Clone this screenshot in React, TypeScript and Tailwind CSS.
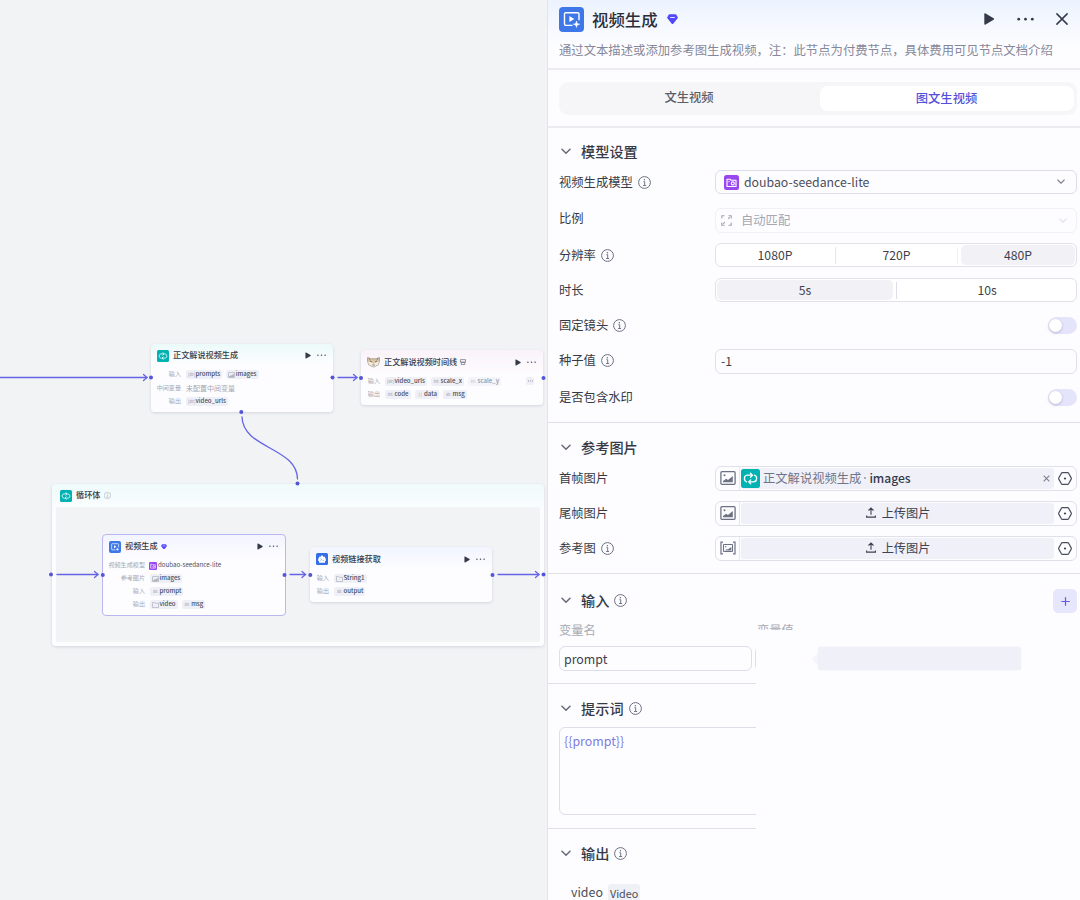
import type { ReactNode } from "react";

type TagItem = { icon: string; text: string; faded?: boolean };

const InfoIcon = ({ size = 13, className = "text-[#6b6f80]" }: { size?: number; className?: string }) => (
  <svg width={size} height={size} viewBox="0 0 13 13" fill="none" stroke="currentColor" className={`shrink-0 ${className}`}>
    <circle cx="6.5" cy="6.5" r="5.9" strokeWidth="1" />
    <path d="M5.4 5.7h1.3v3.7M5.1 9.5h3" strokeWidth="0.95" />
    <circle cx="6.4" cy="3.7" r="0.75" fill="currentColor" stroke="none" />
  </svg>
);

const PlayIcon = ({ w, h }: { w: number; h: number }) => (
  <svg width={w} height={h} viewBox="0 0 11 12" className="shrink-0 text-[#343a4a]">
    <path d="M0.8 1.2v9.6c0 .8.6 1.1 1.3.7l8-4.7c.6-.4.6-1.2 0-1.6l-8-4.7C1.4.1.8.4.8 1.2z" fill="currentColor" />
  </svg>
);

const DotsIcon = ({ w }: { w: number }) => (
  <svg width={w} height={w / 4} viewBox="0 0 16 4" fill="#343a4a" className="shrink-0">
    <circle cx="1.6" cy="2" r="1.3" />
    <circle cx="8" cy="2" r="1.3" />
    <circle cx="14.4" cy="2" r="1.3" />
  </svg>
);

const GemIcon = ({ w }: { w: number }) => (
  <svg width={w} height={w * 0.95} viewBox="0 0 12 11.4" className="shrink-0">
    <path d="M2.7.4h6.6c.4 0 .7.2.9.5l1.5 2.6c.2.4.2.8-.1 1.1L6.8 10.600c-.4.5-1.1.5-1.6 0L.4 4.6C.1 4.3.1 3.9.3 3.5L1.8.9c.2-.3.5-.5.9-.5z" fill="#5147ff" />
    <path d="M3.9 3.8h4.2" stroke="#e8e6ff" strokeWidth="1.1" strokeLinecap="round" />
  </svg>
);

const VideoIcon = ({ size }: { size: number }) => (
  <svg width={size} height={size} viewBox="0 0 25 25" fill="none" className="shrink-0">
    <rect width="25" height="25" rx="4" fill="#3e78e8" />
    <path d="M13.5 18.400H6.8a1.3 1.3 0 0 1-1.3-1.300V7a1.3 1.3 0 0 1 1.3-1.300h11.9A1.3 1.3 0 0 1 20 7v6.300" stroke="#fff" strokeWidth="1.4" />
    <path d="M10.400 9v6l4.900-3z" fill="#fff" />
    <path d="M17.500 14c.3 2.200 1 2.900 3.200 3.200-2.200.3-2.900 1-3.200 3.200-.3-2.200-1-2.900-3.200-3.200 2.200-.3 2.900-1 3.200-3.200z" fill="#fff" stroke="#fff" strokeWidth=".6" />
  </svg>
);

const LoopIcon = ({ size }: { size: number }) => (
  <svg width={size} height={size} viewBox="0 0 19 19" fill="none" className="shrink-0">
    <rect width="19" height="19" rx="2.5" fill="#00b2b2" />
    <g stroke="#fff" strokeWidth="1.3" strokeLinecap="round" strokeLinejoin="round">
      <path d="M5.600 12.900C2.500 11.900 2.500 6.200 6.600 6.200h4.800M9.500 4.200l2 2-2 2" />
      <path d="M13.400 6.200c3.100 1 3.100 6.700-1 6.700H7.800M9.700 10.900l-2 2 2 2" />
    </g>
  </svg>
);

const PluginIcon = ({ size }: { size: number }) => (
  <svg width={size} height={size} viewBox="0 0 12 12" className="shrink-0">
    <rect width="12" height="12" rx="1.5" fill="#346ee8" />
    <path d="M3 3.700h1.700a1.300 1.300 0 0 1 2.600 0H9v1.600h.8v2.600H9v1.800H3V7.900h-.8V5.300H3z" fill="#fff" />
    <path d="M4.500 5.700l1 .9-1 .9M6.700 7.500h1" stroke="#346ee8" strokeWidth=".6" fill="none" />
  </svg>
);

const ModelIcon = ({ size }: { size: number }) => (
  <svg width={size} height={size} viewBox="0 0 15 15" fill="none" className="shrink-0">
    <rect width="15" height="15" rx="2.5" fill="#9a48ee" />
    <path d="M3 11.500V4.200h3l1 1h5v6.300z" stroke="#fff" strokeWidth="1.1" strokeLinejoin="round" />
    <circle cx="8.8" cy="8.400" r="1.5" stroke="#fff" strokeWidth="1.1" />
    <circle cx="5" cy="6.600" r=".7" fill="#fff" />
  </svg>
);

const FoxIcon = () => (
  <svg width="13" height="12" viewBox="0 0 13 12" className="shrink-0">
    <path d="M.6 1.500l3.300 1.300h5.200l3.300-1.300.1 3.300-1.200 4-4.800 2.300-4.800-2.300L.5 4.800z" fill="#dcc7a8" stroke="#958a80" strokeWidth=".7" />
    <path d="M1 5.500l3.500 1 2 1.700 2-1.700 3.500-1-1 3-4.500 2.300L2 8.500z" fill="#f6eee4" />
    <path d="M2.800 5l2.200.9M10.200 5L8 5.900M5.300 9h2.400M1.800 2.500l1.500 1.300M11.200 2.500L9.700 3.800" stroke="#6a5d59" strokeWidth=".8" />
  </svg>
);

const PictureIcon = ({ array }: { array?: boolean }) =>
  array ? (
    <svg width="16" height="14" viewBox="0 0 16 14" fill="none" stroke="#6d7283" className="shrink-0">
      <path d="M3 1.200H1v11.600h2M13 1.200h2v11.600h-2" strokeWidth="1.2" />
      <rect x="3.5" y="3.5" width="9" height="7" rx=".6" strokeWidth="1.1" />
      <path d="M5 9.500l1.800-1.600 1 .6L11.300 6v3.500z" fill="#6d7283" stroke="none" />
      <circle cx="5.700" cy="5.700" r=".7" fill="#6d7283" stroke="none" />
    </svg>
  ) : (
    <svg width="16" height="14" viewBox="0 0 16 14" fill="none" className="shrink-0">
      <rect x=".9" y=".7" width="14.2" height="12.6" rx="1" stroke="#6d7283" strokeWidth="1.3" />
      <path d="M3 11.300V10l3.200-2.200 1.800 1.200L12.800 5v6.300z" fill="#6d7283" />
      <circle cx="4.500" cy="4.200" r="1" fill="#6d7283" />
    </svg>
  );

const HexIcon = () => (
  <svg width="14" height="13" viewBox="0 0 14 13" fill="none" className="shrink-0">
    <path d="M4.300.7h5.400c.4 0 .7.200.9.500l2.600 4.700c.2.400.2.800 0 1.200l-2.600 4.700c-.2.300-.5.500-.9.500H4.300c-.4 0-.7-.2-.9-.5L.8 7.100c-.2-.4-.2-.8 0-1.200l2.600-4.700c.2-.3.500-.5.900-.5z" stroke="#4a4f5e" strokeWidth="1.2" />
    <circle cx="7" cy="6.500" r="1.1" fill="#3f4454" />
  </svg>
);

const Chevron = ({ className = "text-[#666a78]", size = 10 }: { className?: string; size?: number }) => (
  <svg width={size} height={size * 0.7} viewBox="0 0 10 7" fill="none" className={`shrink-0 ${className}`}>
    <path d="M1 1.300l4 4 4-4" stroke="currentColor" strokeWidth="1.5" strokeLinecap="round" strokeLinejoin="round" />
  </svg>
);

const TagGlyph = ({ icon }: { icon: string }) => {
  if (icon === "image" || icon === "images") {
    return (
      <svg width="7" height="6" viewBox="0 0 7 6" fill="none" stroke="#9ea2af" strokeWidth=".6" className="shrink-0">
        <rect x=".5" y=".4" width="6" height="5.2" rx=".4" />
        <path d="M1.300 4.700l1.600-1.200.8.5 1.700-1.800v2.500z" fill="#b5b8c2" />
      </svg>
    );
  }
  if (icon === "folder") {
    return (
      <svg width="7" height="6" viewBox="0 0 7 6" fill="none" stroke="#a3a6b4" strokeWidth=".6" className="shrink-0">
        <path d="M.5 5.500V.5h2l.7.8h3.300v4.200z" />
      </svg>
    );
  }
  return (
    <span className="flex w-[7px] shrink-0 justify-center whitespace-nowrap text-[4.2px] tracking-[-0.2px] text-[#9699a8]">
      {icon}
    </span>
  );
};

const Tag = ({ icon, text, faded }: TagItem) => (
  <span
    className={`flex h-[9px] items-center gap-[0.5px] rounded-[2px] bg-[#eff0f7] px-[2px] ${faded ? "opacity-60" : ""}`}
  >
    <TagGlyph icon={icon} />
    <span className="text-[6.1px] font-medium text-[#474c5c]">{text}</span>
  </span>
);

const NodeRow = ({ label, width, className = "", children }: { label: string; width: string; className?: string; children: ReactNode }) => (
  <div className={`flex items-center gap-[5px] ${className}`}>
    <span className={`flex shrink-0 justify-end whitespace-nowrap text-[6.1px] text-[#a5a7b0] ${width}`}>{label}</span>
    <div className="flex items-center gap-[4px]">{children}</div>
  </div>
);

const NodeHead = ({ icon, title, extra, className = "" }: { icon: ReactNode; title: string; extra?: ReactNode; className?: string }) => (
  <div className={`flex items-center ${className}`}>
    {icon}
    <span className="ml-[4px] text-[8.15px] font-medium text-[#343a49]">{title}</span>
    <span className="ml-[3px]">{extra}</span>
    <span className="ml-auto mr-[6px]">
      <PlayIcon w={6} h={7} />
    </span>
    <span className="mr-[1px]">
      <DotsIcon w={9} />
    </span>
  </div>
);

const dots = [
  [151, 377.5], [332.5, 377.5], [361, 378], [543.5, 378], [241.3, 412], [297.5, 483.5],
  [51, 574.5], [102.8, 575], [284.5, 575], [310.3, 575], [492.5, 575], [543.5, 574.5],
];

const Arrow = ({ from, to, y }: { from: number; to: number; y: number }) => (
  <g>
    <path d={`M${from} ${y}H${to}`} />
    <path d={`M${to - 3.5} ${y - 3}l3.500 3-3.500 3`} />
  </g>
);

const Canvas = () => (
  <div className="relative h-full w-[547px] shrink-0 overflow-hidden bg-[#f2f3f5]">
    <div className="absolute left-[151px] top-[344px] h-[68px] w-[182px] rounded-[4px] bg-linear-to-b from-[#ecfaf9] to-[#fdfdff] to-30% px-[6px] shadow-[0_1px_3px_rgba(40,50,80,0.15)]">
      <NodeHead icon={<LoopIcon size={12} />} title="正文解说视频生成" className="h-[23px]" />
      <NodeRow label="输入" width="w-[24px]" className="mt-[1px] h-[13px]">
        <Tag icon="[str]" text="prompts" />
        <Tag icon="images" text="images" />
      </NodeRow>
      <NodeRow label="中间变量" width="w-[24px]" className="h-[14px]">
        <span className="text-[7px] text-[#a5a7b0]">未配置中间变量</span>
      </NodeRow>
      <NodeRow label="输出" width="w-[24px]" className="h-[12px]">
        <Tag icon="[str]" text="video_urls" />
      </NodeRow>
    </div>

    <div className="absolute left-[361px] top-[350px] h-[55px] w-[182px] rounded-[4px] bg-linear-to-b from-[#faf3f9] to-[#fdfdff] to-50% px-[6px] shadow-[0_1px_3px_rgba(40,50,80,0.15)]">
      <NodeHead
        icon={<FoxIcon />}
        title="正文解说视频时间线"
        className="h-[24px]"
        extra={
          <svg width="6" height="6" viewBox="0 0 6 6" fill="none" stroke="#6b6f7d" strokeWidth=".7">
            <path d="M.5 3V.6h5V3zM.5 3.500h5M1.300 4v1.500h3.400V4" />
          </svg>
        }
      />
      <div className="relative">
        <NodeRow label="输入" width="w-[13px]" className="mt-[1px] h-[13px]">
          <Tag icon="[str]" text="video_urls" />
          <Tag icon="int." text="scale_x" />
          <Tag icon="int." text="scale_y" faded />
        </NodeRow>
        <span className="absolute right-[3px] top-[2px] flex h-[8px] w-[8px] items-center justify-center rounded-[2px] bg-[#efeff5]">
          <svg width="5" height="2" viewBox="0 0 5 2" fill="#9699a8">
            <path d="M0 .6h1v.8H0zM2 .6h1v.8H2zM4 .6h1v.8H4z" />
          </svg>
        </span>
      </div>
      <NodeRow label="输出" width="w-[13px]" className="h-[13px]">
        <Tag icon="int." text="code" />
        <Tag icon="{ }" text="data" />
        <Tag icon="str." text="msg" />
      </NodeRow>
    </div>

    <div className="absolute left-[52px] top-[484px] flex h-[162px] w-[492px] flex-col rounded-[4px] bg-linear-to-b from-[#effbfb] to-[#fdfdff] to-20% px-[4px] pb-[4px] shadow-[0_1px_3px_rgba(40,50,80,0.15)]">
      <div className="flex h-[23px] shrink-0 items-center gap-[4px] px-[4px]">
        <LoopIcon size={12} />
        <span className="text-[8.15px] font-medium text-[#343a49]">循环体</span>
        <InfoIcon size={7} className="text-[#a2a6b2]" />
      </div>
      <div className="flex-1 rounded-[2px] bg-[#f2f3f5]" />
    </div>

    <div className="absolute left-[102px] top-[534px] h-[82px] w-[184px] rounded-[4px] border border-[#b9b6f0] bg-linear-to-b from-[#f2f4ff] to-[#fdfdff] to-30% px-[6px]">
      <NodeHead icon={<VideoIcon size={12} />} title="视频生成" className="h-[23px]" extra={<GemIcon w={6} />} />
      <NodeRow label="视频生成模型" width="w-[36px]" className="mt-[1px] h-[13px]">
        <span className="-ml-[1px] flex items-center gap-[1px]">
          <ModelIcon size={8} />
          <span className="whitespace-nowrap text-[6.2px] text-[#4a4f5e]">doubao-seedance-lite</span>
        </span>
      </NodeRow>
      <NodeRow label="参考图片" width="w-[36px]" className="h-[13px]">
        <Tag icon="image" text="images" />
      </NodeRow>
      <NodeRow label="输入" width="w-[36px]" className="h-[13px]">
        <Tag icon="str." text="prompt" />
      </NodeRow>
      <NodeRow label="输出" width="w-[36px]" className="h-[13px]">
        <Tag icon="folder" text="video" />
        <Tag icon="str." text="msg" />
      </NodeRow>
    </div>

    <div className="absolute left-[310px] top-[547px] h-[55px] w-[182px] rounded-[4px] bg-linear-to-b from-[#f1f5fe] to-[#fdfdff] to-40% px-[6px] shadow-[0_1px_3px_rgba(40,50,80,0.15)]">
      <NodeHead icon={<PluginIcon size={12} />} title="视频链接获取" className="h-[24px]" />
      <NodeRow label="输入" width="w-[13px]" className="mt-[1px] h-[13px]">
        <Tag icon="folder" text="String1" />
      </NodeRow>
      <NodeRow label="输出" width="w-[13px]" className="h-[13px]">
        <Tag icon="str." text="output" />
      </NodeRow>
    </div>

    <svg width="547" height="900" className="absolute inset-0" fill="none" stroke="#6465e6" strokeWidth="1.3" strokeLinecap="round">
      <Arrow from={0} to={147} y={377.5} />
      <Arrow from={338} to={357} y={377.5} />
      <Arrow from={57} to={98} y={574.5} />
      <Arrow from={290} to={305.5} y={574.5} />
      <Arrow from={498} to={539} y={574.5} />
      <path d="M242 417C243 449 297 447 297.500 479" />
      {dots.map(([x, y]) => (
        <circle key={`${x}-${y}`} cx={x} cy={y} r="2" fill="#5255d8" stroke="none" />
      ))}
    </svg>
  </div>
);

const SectionTitle = ({ title, info, className = "" }: { title: string; info?: boolean; className?: string }) => (
  <div className={`flex h-[22px] shrink-0 items-center pl-[2px] ${className}`}>
    <Chevron />
    <h3 className="ml-[10px] mr-[5px] text-[14.2px] font-medium text-[#363a47]">{title}</h3>
    {info && <InfoIcon />}
  </div>
);

const FormRow = ({ label, info, className = "", children }: { label: string; info?: boolean; className?: string; children: ReactNode }) => (
  <div className={`flex h-[24px] items-center ${className}`}>
    <div className="flex w-[156px] shrink-0 items-center gap-[5px] text-[12.3px] text-[#363a45]">
      {label}
      {info && <InfoIcon />}
    </div>
    {children}
  </div>
);

const Switch = () => (
  <div className="ml-auto flex h-[17px] w-[29px] items-center rounded-full bg-[#e4e4fb] px-[1px]">
    <div className="size-[13px] rounded-full bg-white shadow-[0_1px_3px_rgba(40,40,90,0.25)]" />
  </div>
);

const Field = ({ array, children }: { array?: boolean; children: ReactNode }) => (
  <div className="flex h-[25px] flex-1 items-center rounded-[6px] border border-[#dfe0e8]">
    <span className="flex h-full w-[24px] shrink-0 items-center justify-center border-r border-[#e6e7ef]">
      <PictureIcon array={array} />
    </span>
    <div className="ml-[1px] flex h-[21px] flex-1 items-center rounded-[3px] bg-[#f0f0f8]">{children}</div>
    <span className="flex w-[22px] shrink-0 justify-center">
      <HexIcon />
    </span>
  </div>
);

const UploadButton = () => (
  <span className="flex w-full items-center justify-center gap-[6px] pl-[1px] text-[12.2px] text-[#3d4252]">
    <svg width="10" height="11" viewBox="0 0 10 11" fill="none" stroke="currentColor" strokeWidth="1.1">
      <path d="M5 7.800V1.200M2.500 3.500L5 1l2.500 2.500M.6 8.500v1.600h8.800V8.500" />
    </svg>
    上传图片
  </span>
);

const Panel = () => (
  <div className="relative flex h-full flex-1 flex-col overflow-hidden border-l border-[#e2e3ea] bg-[#fdfdff]">
    <header className="h-[70px] shrink-0 border-b-2 border-[#ececf0] bg-linear-to-b from-[#ecf3fe] to-[#fdfdff] to-70% pl-[11px] pr-[12px]">
      <div className="flex h-[38px] items-center">
        <VideoIcon size={25} />
        <h2 className="ml-[8px] mr-[9px] mt-[1px] text-[16.4px] font-medium text-[#2b2e38]">视频生成</h2>
        <GemIcon w={11} />
        <span className="ml-auto">
          <PlayIcon w={12} h={12} />
        </span>
        <span className="ml-[22px]">
          <DotsIcon w={17} />
        </span>
        <svg width="12" height="12" viewBox="0 0 12 12" className="ml-[22px]" stroke="#343a4a" strokeWidth="1.5" strokeLinecap="round">
          <path d="M.9.9l10.200 10.200M11.100.9L.9 11.100" />
        </svg>
      </div>
      <p className="mt-[2px] whitespace-nowrap text-[12.35px] leading-[20px] text-[#85889a]">
        通过文本描述或添加参考图生成视频，注：此节点为付费节点，具体费用可见节点文档介绍
      </p>
    </header>

    <div className="h-[58px] shrink-0 border-b-2 border-[#ececf0] pl-[11px] pr-[3px] pt-[12px]">
      <div className="flex h-[33px] items-center rounded-[9px] bg-[#f6f6f8] p-[3px] text-[12.3px]">
        <div className="flex-1 pb-[2px] pr-[4px] text-center font-medium text-[#5c5d66]">文生视频</div>
        <div className="flex h-[25px] w-[254px] items-center justify-center rounded-[8px] bg-white pb-[1px] pr-[1px] font-medium text-[#524fd8]">
          图文生视频
        </div>
      </div>
    </div>

    <section className="h-[295px] shrink-0 border-b border-[#dfe0e8] pl-[11px] pr-[3px] pt-[12px]">
      <SectionTitle title="模型设置" />
      <FormRow label="视频生成模型" info className="mt-[8px]">
        <div className="flex h-[24px] flex-1 items-center rounded-[6px] border border-[#dcdde6] pl-[8px] pr-[11px]">
          <ModelIcon size={15} />
          <span className="ml-[5px] flex-1 text-[12.3px] text-[#4a4e5a]">doubao-seedance-lite</span>
          <Chevron size={8} className="text-[#858896]" />
        </div>
      </FormRow>
      <div className="mt-[14px] flex h-[24px]">
        <div className="w-[156px] pt-[4px] text-[12.3px] text-[#363a45]">比例</div>
        <div className="flex h-[25px] flex-1 items-center rounded-[6px] border border-[#f0f0f5] pl-[5px] pr-[9px]">
          <svg width="11" height="11" viewBox="0 0 11 11" fill="none" stroke="#a0a3ad" strokeWidth="1.1">
            <path d="M.8 3.500V.8h2.700M7.500.8h2.700v2.700M10.200 7.500v2.700H7.500M3.500 10.200H.8V7.500M7.200 3.800l1.600-1.600M3.800 7.200L2.200 8.800" />
          </svg>
          <span className="ml-[9px] flex-1 text-[12.3px] text-[#a6a8b1]">自动匹配</span>
          <Chevron size={8} className="text-[#e3e4ea]" />
        </div>
      </div>
      <FormRow label="分辨率" info className="mt-[11px]">
        <div className="flex h-[24px] flex-1 items-center rounded-[6px] border border-[#e1e2e9] bg-white p-[1px] text-[12.2px] text-[#3d414c]">
          <div className="w-[118px] pr-[2px] text-center">1080P</div>
          <div className="h-[17px] w-px bg-[#e6e7ee]" />
          <div className="flex-1 text-center">720P</div>
          <div className="h-[17px] w-px bg-[#f0f0f5]" />
          <div className="ml-[3px] flex h-[20px] w-[114px] items-center justify-center rounded-[5px] bg-[#f1f1f6]">480P</div>
        </div>
      </FormRow>
      <FormRow label="时长" className="mt-[11px]">
        <div className="flex h-[24px] flex-1 items-center rounded-[6px] border border-[#e1e2e9] bg-white p-[1px] text-[12.2px] text-[#3d414c]">
          <div className="flex h-[20px] w-[176px] items-center justify-center rounded-[5px] bg-[#f1f1f6]">5s</div>
          <div className="ml-[3px] h-[17px] w-px bg-[#dddee6]" />
          <div className="flex-1 pl-[2px] text-center">10s</div>
        </div>
      </FormRow>
      <FormRow label="固定镜头" info className="mt-[11px]">
        <Switch />
      </FormRow>
      <FormRow label="种子值" info className="mt-[11px]">
        <div className="relative top-[1px] flex h-[25px] flex-1 items-center rounded-[6px] border border-[#dfe0e8] pl-[5px] pt-[1px] text-[12.2px] text-[#3d414c]">-1</div>
      </FormRow>
      <FormRow label="是否包含水印" className="mt-[13px]">
        <Switch />
      </FormRow>
    </section>

    <section className="h-[151px] shrink-0 border-b border-[#dfe0e8] pl-[11px] pr-[3px] pt-[13px]">
      <SectionTitle title="参考图片" />
      <FormRow label="首帧图片" info={false} className="mt-[8px]">
        <Field>
          <LoopIcon size={19} />
          <span className="ml-[3px] text-[12.3px] text-[#70758a]">正文解说视频生成</span>
          <span className="mx-[3px] h-[2px] w-[2px] rounded-full bg-[#9497a4]" />
          <span className="text-[12.1px] font-medium text-[#343948]">images</span>
          <svg width="7" height="7" viewBox="0 0 7 7" stroke="#7c8090" strokeWidth="1.1" className="ml-auto mr-[4px]">
            <path d="M.7.7l5.600 5.600M6.300.7L.7 6.300" />
          </svg>
        </Field>
      </FormRow>
      <FormRow label="尾帧图片" className="mt-[11px]">
        <Field>
          <UploadButton />
        </Field>
      </FormRow>
      <FormRow label="参考图" info className="mt-[11px]">
        <Field array>
          <UploadButton />
        </Field>
      </FormRow>
    </section>

    <section className="h-[110px] shrink-0 border-b border-[#dfe0e8] pl-[11px] pr-[3px] pt-[14px]">
      <div className="flex h-[26px] items-center justify-between">
        <SectionTitle title="输入" info className="mb-[2px]" />
        <button className="flex size-[24px] items-center justify-center rounded-[5px] bg-[#e6e6fd]">
          <svg width="9" height="9" viewBox="0 0 9 9" stroke="#645be8" strokeWidth="1.2">
            <path d="M4.500.3v8.400M.3 4.500h8.400" />
          </svg>
        </button>
      </div>
      <div className="mt-[6px] flex h-[20px] items-center text-[12.3px] text-[#a9abb3]">
        <span className="w-[198px]">变量名</span>
        <span>变量值</span>
      </div>
      <div className="mt-[6px] flex h-[25px] gap-[3px]">
        <div className="flex w-[193px] items-center rounded-[6px] border border-[#dddee7] pl-[4px] pt-[1px] text-[12.4px] text-[#3d414c]">prompt</div>
        <div className="w-[100px] rounded-[6px] border border-[#dddee7]" />
      </div>
    </section>

    <section className="h-[145px] shrink-0 border-b border-[#dfe0e8] pl-[11px] pr-[3px] pt-[13px]">
      <SectionTitle title="提示词" info />
      <div className="mt-[8px] h-[88px] rounded-[6px] border border-[#dddee7] px-[4px] pt-[4px] text-[12.4px] leading-[19px] text-[#7d7ce0]">
        {"{{prompt}}"}
      </div>
    </section>

    <section className="flex-1 pl-[11px] pt-[13px]">
      <SectionTitle title="输出" info />
      <div className="mt-[20px] flex h-[16px] items-start pl-[12px]">
        <span className="pt-[2px] text-[12.4px] text-[#4a4e5a]">video</span>
        <span className="ml-[5px] h-[16px] rounded-t-[3px] bg-[#f0f0f7] px-[2px] pt-[4px] text-[10.8px] text-[#4a4e5a]">Video</span>
      </div>
    </section>

    {/* blank sheet over the lower right of the form */}
    <div className="absolute bottom-0 left-[208px] right-0 top-[630px] bg-[#fdfdff] pl-[56px] pt-[17px]">
      <div className="flex">
        <div className="mt-[6px] h-0 w-0 border-y-[6px] border-r-[6px] border-y-transparent border-r-[#f4f4fa]" />
        <div className="h-[23px] w-[203px] rounded-[2px] bg-[#f0f0f8] shadow-[0_0_2px_#f0f0f8]" />
      </div>
    </div>
  </div>
);

export default function App() {
  return (
    <div className="flex h-[900px] w-[1080px] overflow-hidden font-['Noto_Sans_CJK_SC','Noto_Sans',sans-serif] leading-none">
      <Canvas />
      <Panel />
    </div>
  );
}
